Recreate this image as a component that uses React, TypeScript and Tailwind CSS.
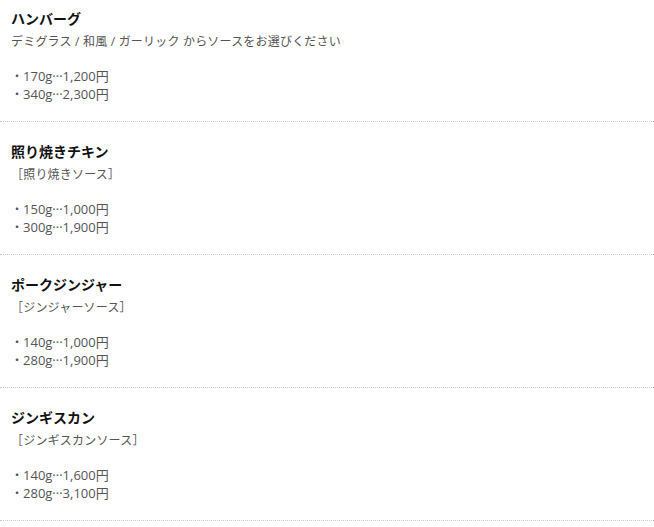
import React from "react";

const menus = [
  {
    name: "ハンバーグ",
    sauce: "デミグラス / 和風 / ガーリック からソースをお選びください",
    prices: ["170g···1,200円", "340g···2,300円"],
  },
  {
    name: "照り焼きチキン",
    sauce: "［照り焼きソース］",
    prices: ["150g···1,000円", "300g···1,900円"],
  },
  {
    name: "ポークジンジャー",
    sauce: "［ジンジャーソース］",
    prices: ["140g···1,000円", "280g···1,900円"],
  },
  {
    name: "ジンギスカン",
    sauce: "［ジンギスカンソース］",
    prices: ["140g···1,600円", "280g···3,100円"],
  },
];

export default function App() {
  return (
    <div
      className="w-[654px] h-[527px] overflow-hidden bg-white"
      style={{ fontFamily: '"Open Sans", "Noto Sans CJK JP", sans-serif' }}
    >
      {menus.map((m, i) => (
        <section
          key={m.name}
          className={`${i === 0 ? "pt-[9px]" : "pt-[20px]"} pb-[18px] px-[11px] border-b border-dotted border-[#c8c8c8]`}
        >
          <h3 className="h-[20px] text-[14px] leading-[20px] font-bold text-[#111]">{m.name}</h3>
          <p className="h-[26px] text-[12px] leading-[26px] tracking-[0.2px] text-[#555]">{m.sauce}</p>
          <ul className="mt-[12px] text-[13px] leading-[18px] text-[#555]">
            {m.prices.map((p) => (
              <li key={p} className="h-[18px]">
                <span className="text-[12px]">・</span>
                {p}
              </li>
            ))}
          </ul>
        </section>
      ))}
    </div>
  );
}
